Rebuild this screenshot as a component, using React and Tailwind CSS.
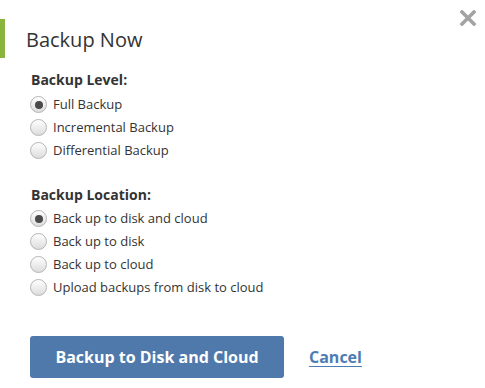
import React, { useState } from "react";

const levels = ["Full Backup", "Incremental Backup", "Differential Backup"];
const locations = [
  "Back up to disk and cloud",
  "Back up to disk",
  "Back up to cloud",
  "Upload backups from disk to cloud",
];

function Radio({ label, checked, onClick }) {
  return (
    <div className="flex items-center h-[23px] cursor-pointer" onClick={onClick}>
      <span className="w-[17px] h-[17px] rounded-full border border-[#b4b4b4] bg-gradient-to-b from-white to-[#dcdcdc] flex items-center justify-center shrink-0">
        {checked && <span className="w-[8px] h-[8px] rounded-full bg-[#4a4a4a]"></span>}
      </span>
      <span className="ml-[6px] text-[13px] text-[#333]">{label}</span>
    </div>
  );
}

export default function App() {
  const [level, setLevel] = useState(0);
  const [location, setLocation] = useState(0);

  return (
    <div
      className="w-[485px] h-[388px] bg-white relative overflow-hidden"
      style={{ fontFamily: '"Open Sans", "Noto Sans", sans-serif' }}
    >
      {/* close */}
      <button className="absolute left-[460px] top-[10px] w-[16px] h-[16px]">
        <svg viewBox="0 0 16 16" width="16" height="16">
          <path d="M2 2 L14 14 M14 2 L2 14" stroke="#a3a3a3" strokeWidth="3.6" strokeLinecap="square" />
        </svg>
      </button>

      {/* header */}
      <div className="mt-[19px] h-[39px] border-l-[5px] border-[#8bb43e] flex items-center pl-[21px]">
        <h1 className="text-[20px] text-[#333] leading-none pt-[2px]">Backup Now</h1>
      </div>

      <div className="pl-[30px] pt-[12px]">
        <div className="text-[14px] font-bold text-[#333] leading-[20px] mb-[3px] pl-px">Backup Level:</div>
        {levels.map((l, i) => (
          <Radio key={l} label={l} checked={level === i} onClick={() => setLevel(i)} />
        ))}

        <div className="text-[14px] font-bold text-[#333] leading-[20px] mt-[23px] mb-[2px] pl-px">Backup Location:</div>
        {locations.map((l, i) => (
          <Radio key={l} label={l} checked={location === i} onClick={() => setLocation(i)} />
        ))}

        <div className="flex items-center mt-[37px]">
          <button className="w-[254px] h-[42px] rounded-[3px] bg-[#4f79aa] text-white text-[16px] font-bold">
            Backup to Disk and Cloud
          </button>
          <a href="#" className="ml-[25px] text-[16px] font-bold text-[#4b7db3] underline underline-offset-[3px]">
            Cancel
          </a>
        </div>
      </div>
    </div>
  );
}
